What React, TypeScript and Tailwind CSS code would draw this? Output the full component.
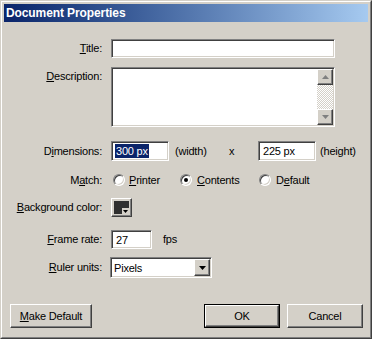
import React from "react";

const sunken =
  "border border-t-[#808080] border-l-[#808080] border-b-white border-r-white shadow-[inset_1px_1px_0_#404040,inset_-1px_-1px_0_#d4d0c8] bg-white";
const raised =
  "border border-t-white border-l-white border-b-[#404040] border-r-[#404040] shadow-[inset_-1px_-1px_0_#808080,inset_1px_1px_0_#d4d0c8] bg-[#d4d0c8]";

function U({ children }: { children: React.ReactNode }) {
  return <span className="underline underline-offset-[1px] decoration-[1px]">{children}</span>;
}

function Label({ children, top }: { children: React.ReactNode; top?: boolean }) {
  return (
    <div className={"w-[98px] shrink-0 text-right leading-[13px] " + (top ? "pt-[3px]" : "")}>{children}</div>
  );
}

function Radio({ checked }: { checked?: boolean }) {
  return (
    <div className="relative w-[12px] h-[12px] rounded-full bg-white border border-t-[#808080] border-l-[#808080] border-b-white border-r-white shadow-[inset_1px_1px_0_#404040,inset_-1px_-1px_0_#d4d0c8] flex items-center justify-center shrink-0">
      {checked && <div className="w-[4px] h-[4px] rounded-full bg-black" />}
    </div>
  );
}

function Arrow({ dir, color }: { dir: "up" | "down"; color: string }) {
  return (
    <svg width="7" height="4" viewBox="0 0 7 4">
      {dir === "up" ? (
        <polygon points="3.5,0 7,4 0,4" fill={color} />
      ) : (
        <polygon points="0,0 7,0 3.5,4" fill={color} />
      )}
    </svg>
  );
}

export default function App() {
  return (
    <div className="w-[372px] h-[339px] font-['Liberation_Sans',Arial,sans-serif] text-[11px] tracking-[-0.2px] text-black">
      <div className="w-full h-full border border-t-[#d4d0c8] border-l-[#d4d0c8] border-b-[#404040] border-r-[#404040]">
        <div className="w-full h-full border border-t-white border-l-white border-b-[#808080] border-r-[#808080] bg-[#d4d0c8] p-[2px] flex flex-col">
          {/* Title bar */}
          <div className="h-[18px] shrink-0 bg-gradient-to-r from-[#0a246a] to-[#a6caf0] flex items-center pl-[2px]">
            <span className="text-white font-bold text-[12px] tracking-[-0.1px] leading-none">Document Properties</span>
          </div>

          {/* Title */}
          <div className="flex items-center mt-[17px] h-[19px]">
            <Label>
              <U>T</U>itle:
            </Label>
            <div className={"ml-[9px] w-[224px] h-[19px] " + sunken} />
          </div>

          {/* Description */}
          <div className="flex items-start mt-[9px]">
            <Label top>
              <U>D</U>escription:
            </Label>
            <div className={"ml-[9px] w-[224px] h-[60px] p-[1px] flex " + sunken}>
              <div className="flex-1" />
              <div className="w-[16px] flex flex-col">
                <div className={"h-[16px] flex items-center justify-center " + raised}>
                  <Arrow dir="up" color="#808080" />
                </div>
                <div className="flex-1 bg-[repeating-conic-gradient(#d4d0c8_0_25%,#ffffff_0_50%)] bg-[length:2px_2px]" />
                <div className={"h-[16px] flex items-center justify-center " + raised}>
                  <Arrow dir="down" color="#808080" />
                </div>
              </div>
            </div>
          </div>

          {/* Dimensions */}
          <div className="flex items-center mt-[14px] h-[20px]">
            <Label>
              D<U>i</U>mensions:
            </Label>
            <div className={"ml-[9px] w-[58px] h-[20px] flex items-center pl-[3px] " + sunken}>
              <span className="bg-[#0a246a] text-white leading-[14px] px-[1px]">300 px</span>
            </div>
            <span className="ml-[6px] w-[54px]">(width)</span>
            <span className="w-[29px]">x</span>
            <div className={"w-[58px] h-[20px] flex items-center pl-[4px] " + sunken}>
              <span className="leading-[14px]">225 px</span>
            </div>
            <span className="ml-[4px]">(height)</span>
          </div>

          {/* Match */}
          <div className="flex items-center mt-[11px] h-[16px]">
            <Label>
              M<U>a</U>tch:
            </Label>
            <div className="ml-[11px] w-[67px] flex items-center">
              <Radio />
              <span className="ml-[4px]">
                <U>P</U>rinter
              </span>
            </div>
            <div className="w-[79px] flex items-center">
              <Radio checked />
              <span className="ml-[5px]">
                <U>C</U>ontents
              </span>
            </div>
            <div className="flex items-center">
              <Radio />
              <span className="ml-[5px]">
                D<U>e</U>fault
              </span>
            </div>
          </div>

          {/* Background color */}
          <div className="flex items-center mt-[10px] h-[19px]">
            <Label>
              <U>B</U>ackground color:
            </Label>
            <div className={"relative ml-[9px] w-[21px] h-[19px] p-[2px] " + raised}>
              <div className="w-full h-full bg-[#2f2f2f]" />
              <div className="absolute right-[2px] bottom-[2px] w-[7px] h-[6px] bg-[#d4d0c8] flex items-center justify-center">
                <svg width="5" height="3" viewBox="0 0 5 3">
                  <polygon points="0,0 5,0 2.5,3" fill="#000" />
                </svg>
              </div>
            </div>
          </div>

          {/* Frame rate */}
          <div className="flex items-center mt-[13px] h-[19px]">
            <Label>
              <U>F</U>rame rate:
            </Label>
            <div className={"ml-[9px] w-[41px] h-[19px] flex items-center pl-[4px] " + sunken}>
              <span className="leading-[14px]">27</span>
            </div>
            <span className="ml-[11px]">fps</span>
          </div>

          {/* Ruler units */}
          <div className="flex items-center mt-[8px] h-[21px]">
            <Label>
              <U>R</U>uler units:
            </Label>
            <div className={"ml-[8px] w-[102px] h-[21px] flex items-center " + sunken}>
              <span className="flex-1 pl-[3px] leading-[14px]">Pixels</span>
              <div className={"w-[16px] h-[17px] mr-[1px] flex items-center justify-center " + raised}>
                <Arrow dir="down" color="#000" />
              </div>
            </div>
          </div>

          {/* Buttons */}
          <div className="flex items-center mt-[26px] h-[24px]">
            <div className={"ml-[6px] w-[82px] h-[24px] flex items-center justify-center " + raised}>
              <span>
                <U>M</U>ake Default
              </span>
            </div>
            <div className="flex-1" />
            <div className="w-[76px] h-[24px] border border-black">
              <div className={"w-full h-full flex items-center justify-center " + raised}>OK</div>
            </div>
            <div className={"ml-[7px] mr-[5px] w-[76px] h-[24px] flex items-center justify-center " + raised}>
              Cancel
            </div>
          </div>
        </div>
      </div>
    </div>
  );
}
